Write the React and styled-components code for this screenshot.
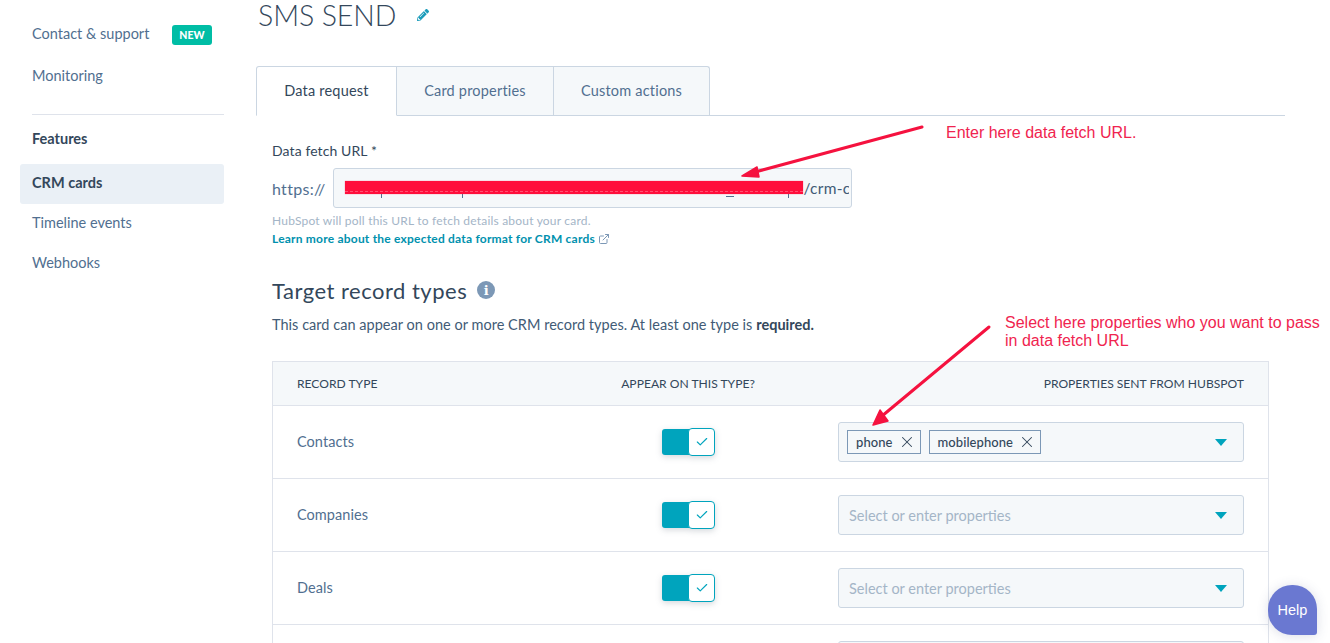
import styled, { createGlobalStyle } from "styled-components";
import { ExternalLink, Check, X } from "lucide-react";
import { FaPencilAlt } from "react-icons/fa";

const Global = createGlobalStyle`
  html, body { margin: 0; padding: 0; background: #fff; height: 643px; overflow: hidden; }
  body { font-family: Lato, "Open Sans", sans-serif; color: #33475b; }
  * { box-sizing: border-box; }
`;

const Page = styled.div`
  position: relative;
  display: flex;
  width: 1330px;
  height: 643px;
  overflow: hidden;
`;

const Sidebar = styled.nav`
  width: 256px;
  flex: none;
  padding: 15px 32px 0 20px;
`;

const NavItem = styled.div`
  display: flex;
  align-items: center;
  justify-content: space-between;
  height: 40px;
  padding: 0 12px 3px;
  border-radius: 3px;
  font-size: 14.5px;
  color: ${(p) => (p.$active ? "#33475b" : "#516f90")};
  font-weight: ${(p) => (p.$active ? 700 : 400)};
  background: ${(p) => (p.$active ? "#eaf0f6" : "transparent")};
  margin-top: ${(p) => p.$top || 0}px;
  margin-bottom: ${(p) => p.$gap || 0}px;
`;

const Badge = styled.span`
  width: 40px;
  height: 20px;
  margin-bottom: -3px;
  border-radius: 3px;
  background: #00bda5;
  color: #fff;
  font-size: 10.5px;
  font-weight: 900;
  display: flex;
  align-items: center;
  justify-content: center;
`;

const Divider = styled.hr`
  border: 0;
  border-top: 1px solid #dfe3eb;
  margin: 0 0 1px 12px;
`;

const NavHead = styled.div`
  height: 46px;
  margin-bottom: 2px;
  padding: 0 12px 2px;
  display: flex;
  align-items: center;
  font-size: 14.5px;
  font-weight: 700;
  color: #33475b;
`;

const Main = styled.main`
  width: 1029px;
  flex: none;
`;

const TitleRow = styled.div`
  display: flex;
  align-items: center;
  gap: 21px;
  height: 30px;
  padding-left: 2px;
`;

const Title = styled.h1`
  margin: 0;
  font-size: 28.5px;
  line-height: 30px;
  font-weight: 300;
  letter-spacing: -0.1px;
  color: #33475b;
`;

const Tabs = styled.div`
  display: flex;
  height: 50px;
  margin-top: 36px;
  border-bottom: 1px solid #cbd6e2;
`;

const Tab = styled.div`
  width: ${(p) => p.$w}px;
  height: ${(p) => (p.$active ? 50 : 49)}px;
  padding-bottom: 2px;
  display: flex;
  align-items: center;
  justify-content: center;
  font-size: 14.5px;
  letter-spacing: 0.2px;
  color: ${(p) => (p.$active ? "#33475b" : "#516f90")};
  background: ${(p) => (p.$active ? "#fff" : "#f5f8fa")};
  border: 1px solid #cbd6e2;
  border-left-width: ${(p) => (p.$first ? 1 : 0)}px;
  border-bottom: ${(p) => (p.$active ? "1px solid #fff" : "0")};
  border-radius: ${(p) => (p.$first ? "3px 0 0 0" : p.$last ? "0 3px 0 0" : "0")};
`;

const Content = styled.div`
  padding: 25px 16px 0;
`;

const Label = styled.div`
  font-size: 14px;
  line-height: 20px;
  letter-spacing: 0.1px;
  color: #33475b;
`;

const UrlRow = styled.div`
  display: flex;
  align-items: center;
  gap: 8px;
  margin-top: 7px;
  font-size: 16px;
  letter-spacing: 0.3px;
  color: #516f90;
`;

const UrlInput = styled.div`
  position: relative;
  width: 519px;
  height: 40px;
  padding-right: 2px;
  border: 1px solid #cbd6e2;
  border-radius: 3px;
  background: #f5f8fa;
  display: flex;
  align-items: center;
  justify-content: flex-end;
  overflow: hidden;
  font-size: 15.5px;
  color: #425b76;
`;

const UrlTail = styled.span`
  width: 46px;
  overflow: hidden;
  white-space: nowrap;
`;

const Redaction = styled.div`
  position: absolute;
  left: 11px;
  top: 12px;
  width: 458px;
  height: 13px;
  background: #ff0f3c;
  box-shadow: 0 0 1px rgba(255, 15, 60, 0.6);

  &::after {
    content: "";
    position: absolute;
    left: 0;
    right: 0;
    bottom: 2px;
    border-bottom: 1px dashed rgba(255, 255, 255, 0.28);
  }
`;

const Descender = styled.span`
  position: absolute;
  left: ${(p) => p.$x}px;
  top: ${(p) => (p.$wide ? 27 : 25)}px;
  width: ${(p) => (p.$wide ? 8 : 1)}px;
  height: ${(p) => (p.$wide ? 1 : 4)}px;
  background: #516f90;
`;

const Hint = styled.div`
  margin-top: 5px;
  font-size: 12px;
  line-height: 16px;
  letter-spacing: 0.2px;
  color: #a4b5c7;
`;

const LearnLink = styled.div`
  display: flex;
  align-items: center;
  gap: 3px;
  margin-top: 1px;
  font-size: 12px;
  line-height: 18px;
  font-weight: 700;
  letter-spacing: 0.21px;
  color: #0091ae;
`;

const SectionHead = styled.div`
  display: flex;
  align-items: center;
  gap: 10px;
  margin-top: 27px;
  height: 30px;
`;

const SectionTitle = styled.h2`
  margin: 0;
  font-size: 22px;
  font-weight: 400;
  letter-spacing: 0.5px;
  color: #33475b;
`;

const Info = styled.span`
  width: 18px;
  height: 18px;
  border-radius: 50%;
  background: #7c98b6;
  color: #fff;
  font-family: "DejaVu Serif", serif;
  font-size: 13px;
  font-weight: 700;
  display: flex;
  align-items: center;
  justify-content: center;
`;

const SectionText = styled.p`
  margin: 10px 0 0;
  font-size: 14.5px;
  line-height: 20px;
  letter-spacing: 0.03px;
  color: #425b76;
  b { font-weight: 700; color: #33475b; }
`;

const Table = styled.div`
  width: 997px;
  margin-top: 26px;
  border: 1px solid #dfe3eb;
  border-bottom: 0;
`;

const Grid = styled.div`
  display: grid;
  grid-template-columns: 24px 316px 225px 406px;
  align-items: center;
`;

const HeadRow = styled(Grid)`
  height: 44px;
  background: #f5f8fa;
  border-bottom: 1px solid #dfe3eb;
  font-size: 12.1px;
  color: #33475b;
`;

const HeadCell = styled.div`
  grid-column: ${(p) => p.$col};
  text-align: ${(p) => p.$align || "left"};
  white-space: nowrap;
  padding-right: ${(p) => p.$pr || 0}px;
`;

const Row = styled(Grid)`
  height: 73px;
  border-bottom: 1px solid #dfe3eb;
  font-size: 14.5px;
  letter-spacing: 0.05px;
  color: #516f90;
`;

const RecordName = styled.div`
  grid-column: 2;
  transform: translateY(-1px);
`;

const ToggleCell = styled.div`
  grid-column: 3;
  display: flex;
  padding-left: 49px;
`;

const Toggle = styled.div`
  display: flex;
  align-items: center;
  width: 53px;
  height: 28px;
  filter: drop-shadow(0 2px 3px rgba(45, 62, 80, 0.2));
`;

const ToggleFill = styled.div`
  width: 28px;
  height: 26px;
  background: #00a4bd;
  border-radius: 3px 0 0 3px;
`;

const ToggleKnob = styled.div`
  width: 27px;
  height: 28px;
  margin-left: -2px;
  background: #fff;
  border: 1px solid #00a4bd;
  border-radius: 4px;
  display: flex;
  align-items: center;
  justify-content: center;
  color: #00a4bd;
`;

const Select = styled.div`
  grid-column: 4;
  height: 40px;
  padding: 0 16px 0 8px;
  border: 1px solid #cbd6e2;
  border-radius: 3px;
  background: #f5f8fa;
  display: flex;
  align-items: center;
  gap: 8px;
`;

const Placeholder = styled.span`
  padding-left: 2px;
  font-size: 14.5px;
  letter-spacing: 0;
  color: #a4b5c7;
`;

const Chip = styled.span`
  display: flex;
  align-items: center;
  gap: 9px;
  height: 24px;
  padding: 0 8px;
  border: 1px solid #7c98b6;
  font-size: 13px;
  font-weight: 500;
  letter-spacing: 0.07px;
  color: #33475b;

  svg { margin: 0 -4px; }
`;

const Caret = styled.span`
  width: 0;
  height: 0;
  margin-left: auto;
  border-left: 6px solid transparent;
  border-right: 6px solid transparent;
  border-top: 7px solid #00a4bd;
`;

const Note = styled.div`
  position: absolute;
  left: ${(p) => p.$x}px;
  top: ${(p) => p.$y}px;
  font-family: "Liberation Sans", Arial, sans-serif;
  font-size: 16px;
  line-height: 18px;
  white-space: nowrap;
  color: #f0244f;
`;

const Arrows = styled.svg`
  position: absolute;
  left: 0;
  top: 0;
  pointer-events: none;
`;

const HelpButton = styled.div`
  position: absolute;
  left: 1268px;
  top: 585px;
  width: 49px;
  height: 50px;
  border-radius: 24px 24px 3px 24px;
  background: #6a78d1;
  box-shadow: 0 1px 12px rgba(60, 70, 120, 0.18);
  color: #fff;
  font-family: "Liberation Sans", Arial, sans-serif;
  font-size: 14.5px;
  display: flex;
  align-items: center;
  justify-content: center;
`;

const records = ["Contacts", "Companies", "Deals", ""];

function App() {
  return (
    <Page>
      <Global />
      <Sidebar>
        <NavItem>
          Contact &amp; support <Badge>NEW</Badge>
        </NavItem>
        <NavItem $top={2} $gap={17}>Monitoring</NavItem>
        <Divider />
        <NavHead>Features</NavHead>
        <NavItem $active>CRM cards</NavItem>
        <NavItem>Timeline events</NavItem>
        <NavItem>Webhooks</NavItem>
      </Sidebar>
      <Main>
        <TitleRow>
          <Title>SMS SEND</Title>
          <FaPencilAlt size={12} color="#1c9cba" />
        </TitleRow>
        <Tabs>
          <Tab $w={141} $first $active>Data request</Tab>
          <Tab $w={157}>Card properties</Tab>
          <Tab $w={156} $last>Custom actions</Tab>
        </Tabs>
        <Content>
          <Label>Data fetch URL *</Label>
          <UrlRow>
            https://
            <UrlInput>
              <Descender $x={47} />
              <Descender $x={128} />
              <Descender $x={392} $wide />
              <Descender $x={454} />
              <Redaction />
              <UrlTail>/crm-card</UrlTail>
            </UrlInput>
          </UrlRow>
          <Hint>HubSpot will poll this URL to fetch details about your card.</Hint>
          <LearnLink>
            Learn more about the expected data format for CRM cards
            <ExternalLink size={12} color="#7c98b6" />
          </LearnLink>
          <SectionHead>
            <SectionTitle>Target record types</SectionTitle>
            <Info>i</Info>
          </SectionHead>
          <SectionText>
            This card can appear on one or more CRM record types. At least one type is <b>required.</b>
          </SectionText>
          <Table>
            <HeadRow>
              <HeadCell $col={2}>RECORD TYPE</HeadCell>
              <HeadCell $col={3} $align="center" $pr={75}>APPEAR ON THIS TYPE?</HeadCell>
              <HeadCell $col={4} $align="right">PROPERTIES SENT FROM HUBSPOT</HeadCell>
            </HeadRow>
            {records.map((name, i) => (
              <Row key={i}>
                <RecordName>{name}</RecordName>
                <ToggleCell>
                  {name && (
                    <Toggle>
                      <ToggleFill />
                      <ToggleKnob>
                        <Check size={14} strokeWidth={2} />
                      </ToggleKnob>
                    </Toggle>
                  )}
                </ToggleCell>
                <Select>
                  {i === 0 ? (
                    <>
                      <Chip>phone <X size={18} strokeWidth={1.4} /></Chip>
                      <Chip>mobilephone <X size={18} strokeWidth={1.4} /></Chip>
                    </>
                  ) : (
                    <Placeholder>Select or enter properties</Placeholder>
                  )}
                  <Caret />
                </Select>
              </Row>
            ))}
          </Table>
        </Content>
      </Main>

      <Arrows width="1330" height="643" viewBox="0 0 1330 643">
        <g fill="#f5123f" stroke="#f5123f" strokeLinejoin="round">
          <path d="M922 127 L755 172" strokeWidth="3" fill="none" strokeLinecap="round" />
          <path d="M742 176 L757 167 L759 177 Z" strokeWidth="1.5" />
          <path d="M989 327 L882 416" strokeWidth="3" fill="none" strokeLinecap="round" />
          <path d="M873 425 L880 410 L888 421 Z" strokeWidth="1.5" />
        </g>
      </Arrows>
      <Note $x={946} $y={124}>Enter here data fetch URL.</Note>
      <Note $x={1005} $y={314}>
        Select here properties who you want to pass
        <br />
        in data fetch URL
      </Note>
      <HelpButton>Help</HelpButton>
    </Page>
  );
}

export default App;
